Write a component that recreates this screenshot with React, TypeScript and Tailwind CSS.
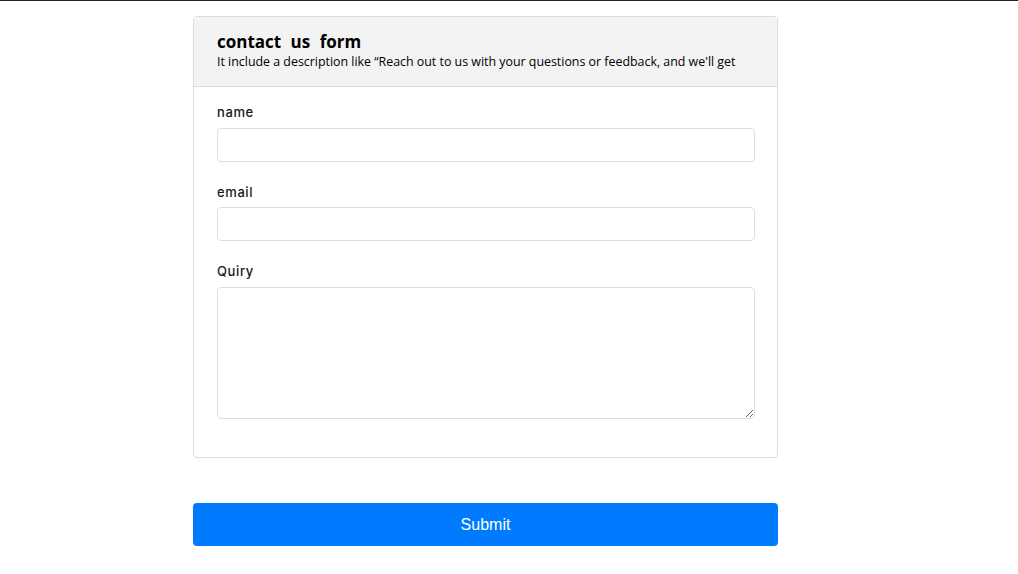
import React from 'react';

const font = { fontFamily: '"Open Sans", "Noto Sans", sans-serif' };
const labelFont = { fontFamily: 'Inter, "Open Sans", sans-serif' };

export default function App() {
  return (
    <div className="min-h-[574px] bg-white" style={font}>
      <div className="h-px bg-[#1f2326]" />

      <div className="ml-[193px] mt-[15px] w-[585px]">
        {/* Card */}
        <div className="rounded border border-[#dcdcdc] bg-white">
          <div className="h-[70px] overflow-hidden border-b border-[#dcdcdc] bg-[#f3f3f3] pl-[23px] pr-[22px] pt-[13px]">
            <h1 className="text-[17px] font-bold leading-[23px] text-black [word-spacing:5px]">
              contact us form
            </h1>
            <p className="whitespace-nowrap text-[12.4px] leading-[18px] text-black">
              It include a description like “Reach out to us with your questions or feedback, and we'll get
            </p>
          </div>

          <form className="flex flex-col gap-5 pb-[38px] pl-[23px] pr-[22px] pt-[15px]" style={labelFont}>
            <div className="flex flex-col">
              <label className="mb-[6px] text-[13px] font-medium leading-5 tracking-[0.6px] text-[#15181b]">name</label>
              <input type="text" className="h-[34px] w-full rounded border border-[#dedede] px-3 text-sm outline-none" />
            </div>
            <div className="flex flex-col">
              <label className="mb-[5px] text-[13px] font-medium leading-5 tracking-[0.6px] text-[#15181b]">email</label>
              <input type="email" className="h-[34px] w-full rounded border border-[#dedede] px-3 text-sm outline-none" />
            </div>
            <div className="flex flex-col">
              <label className="mb-[6px] text-[13px] font-medium leading-5 tracking-[0.6px] text-[#15181b]">Quiry</label>
              <textarea className="block h-[132px] w-full rounded border border-[#dedede] px-3 py-2 text-sm outline-none" />
            </div>
          </form>
        </div>

        <button
          type="button"
          className="mt-[45px] h-[43px] w-full rounded bg-[#007bff] text-[16px] text-white"
          style={{ fontFamily: '"Liberation Sans", Arial, sans-serif' }}
        >
          Submit
        </button>
      </div>
    </div>
  );
}
